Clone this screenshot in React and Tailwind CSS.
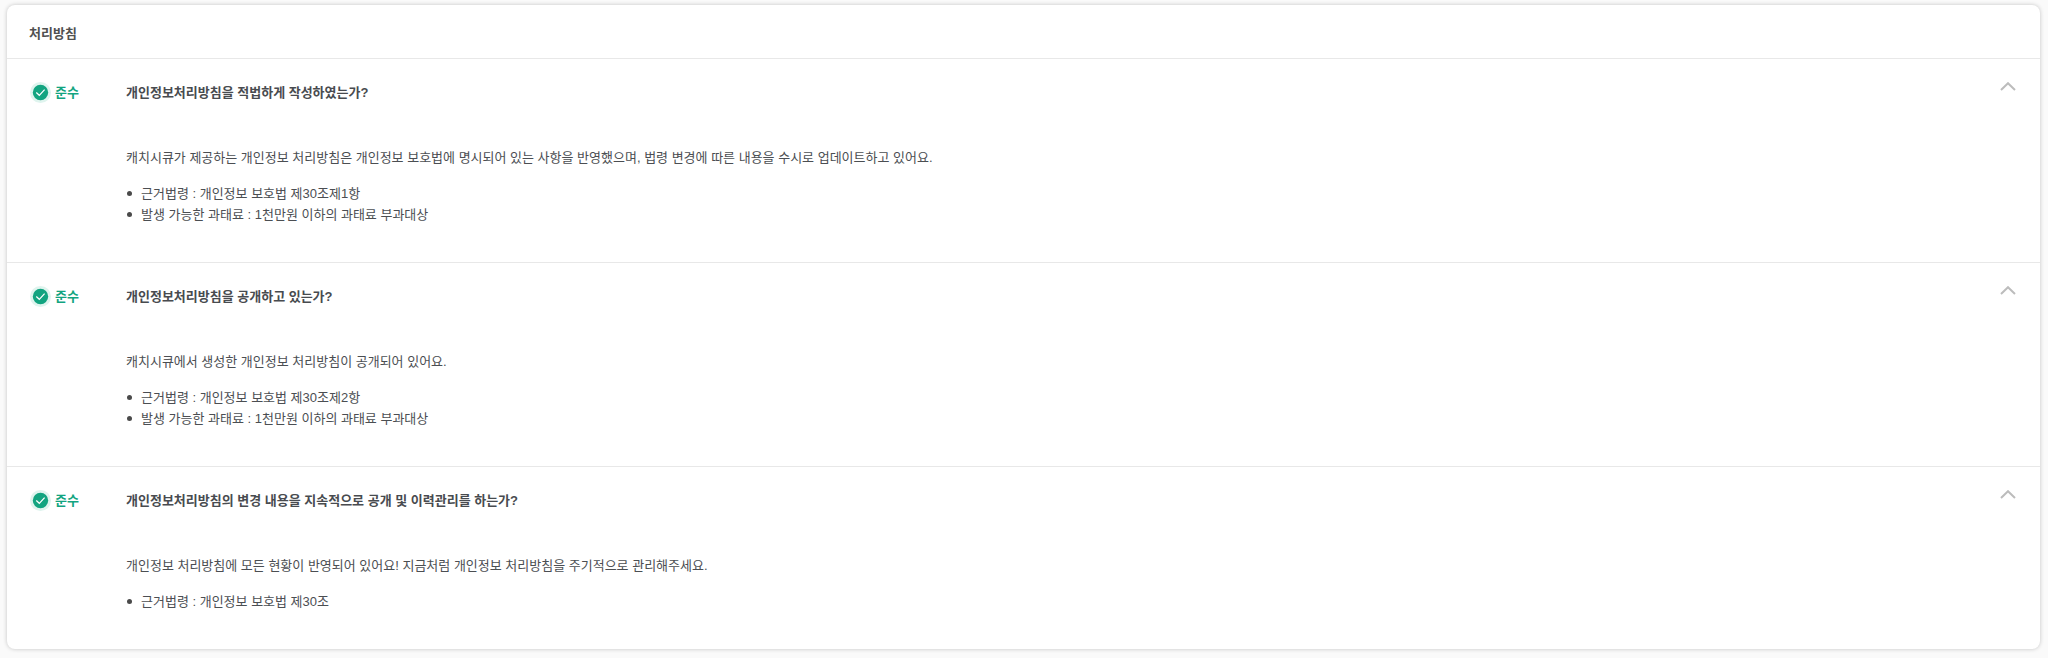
import React, { useState } from 'react';

const items = [
  {
    id: 'lawful',
    status: '준수',
    question: '개인정보처리방침을 적법하게 작성하였는가?',
    description:
      '캐치시큐가 제공하는 개인정보 처리방침은 개인정보 보호법에 명시되어 있는 사항을 반영했으며, 법령 변경에 따른 내용을 수시로 업데이트하고 있어요.',
    notes: ['근거법령 : 개인정보 보호법 제30조제1항', '발생 가능한 과태료 : 1천만원 이하의 과태료 부과대상'],
  },
  {
    id: 'public',
    status: '준수',
    question: '개인정보처리방침을 공개하고 있는가?',
    description: '캐치시큐에서 생성한 개인정보 처리방침이 공개되어 있어요.',
    notes: ['근거법령 : 개인정보 보호법 제30조제2항', '발생 가능한 과태료 : 1천만원 이하의 과태료 부과대상'],
  },
  {
    id: 'history',
    status: '준수',
    question: '개인정보처리방침의 변경 내용을 지속적으로 공개 및 이력관리를 하는가?',
    description: '개인정보 처리방침에 모든 현황이 반영되어 있어요! 지금처럼 개인정보 처리방침을 주기적으로 관리해주세요.',
    notes: ['근거법령 : 개인정보 보호법 제30조'],
  },
];

const StatusIcon = () => (
  <svg className="size-[21px] shrink-0" viewBox="0 0 21 21" fill="none" aria-hidden="true">
    <circle cx="10.5" cy="10.5" r="10.5" fill="#dff4ee" />
    <circle cx="10.5" cy="10.5" r="7.7" fill="#12a480" />
    <path d="M6.3 10.5L9.3 13.3L14.6 7.6" stroke="#fff" strokeWidth="1.2" />
  </svg>
);

const Chevron = ({ open }) => (
  <svg className={`w-4 h-[9px] ${open ? '' : 'rotate-180'}`} viewBox="0 0 16 9" fill="none" aria-hidden="true">
    <path d="M1 8L8 1.2L15 8" stroke="#bcbcbc" strokeWidth="2" />
  </svg>
);

const PolicyItem = ({ item }) => {
  const [open, setOpen] = useState(true);

  return (
    <section className="flex items-start border-t border-[#e8e8e8] pt-[23px] pb-[37px] pl-[23px] pr-6">
      <div className="flex w-24 shrink-0 items-center gap-1 font-bold text-[#12a480]">
        <StatusIcon />
        <span>{item.status}</span>
      </div>
      <div className="min-w-0 flex-1">
        <h3 className="font-bold text-[#484b4f]">{item.question}</h3>
        {open && (
          <div id={item.id} className="mt-11 text-[#4b4e52]">
            <p>{item.description}</p>
            <ul className="mt-[15px]">
              {item.notes.map((note) => (
                <li key={note} className="flex items-center gap-[9px] pl-px">
                  <span className="size-[5px] shrink-0 rounded-full bg-[#4a4a4a]" />
                  {note}
                </li>
              ))}
            </ul>
          </div>
        )}
      </div>
      <button
        type="button"
        aria-expanded={open}
        aria-controls={item.id}
        aria-label={item.question}
        onClick={() => setOpen(!open)}
        className="flex h-[9px] shrink-0 items-center"
      >
        <Chevron open={open} />
      </button>
    </section>
  );
};

export default function App() {
  return (
    <main className="min-h-screen bg-[#fafafa] pt-[5px] pr-2 pb-2 pl-[7px] font-['Liberation_Sans','Noto_Sans_CJK_KR',sans-serif] text-[13px] leading-[21px]">
      <div className="rounded-lg bg-white shadow-[0_0_4px_rgba(0,0,0,0.22)]">
        <h2 className="px-[22px] pt-[18px] pb-[14px] font-bold text-[#505050]">처리방침</h2>
        {items.map((item) => (
          <PolicyItem key={item.id} item={item} />
        ))}
      </div>
    </main>
  );
}
